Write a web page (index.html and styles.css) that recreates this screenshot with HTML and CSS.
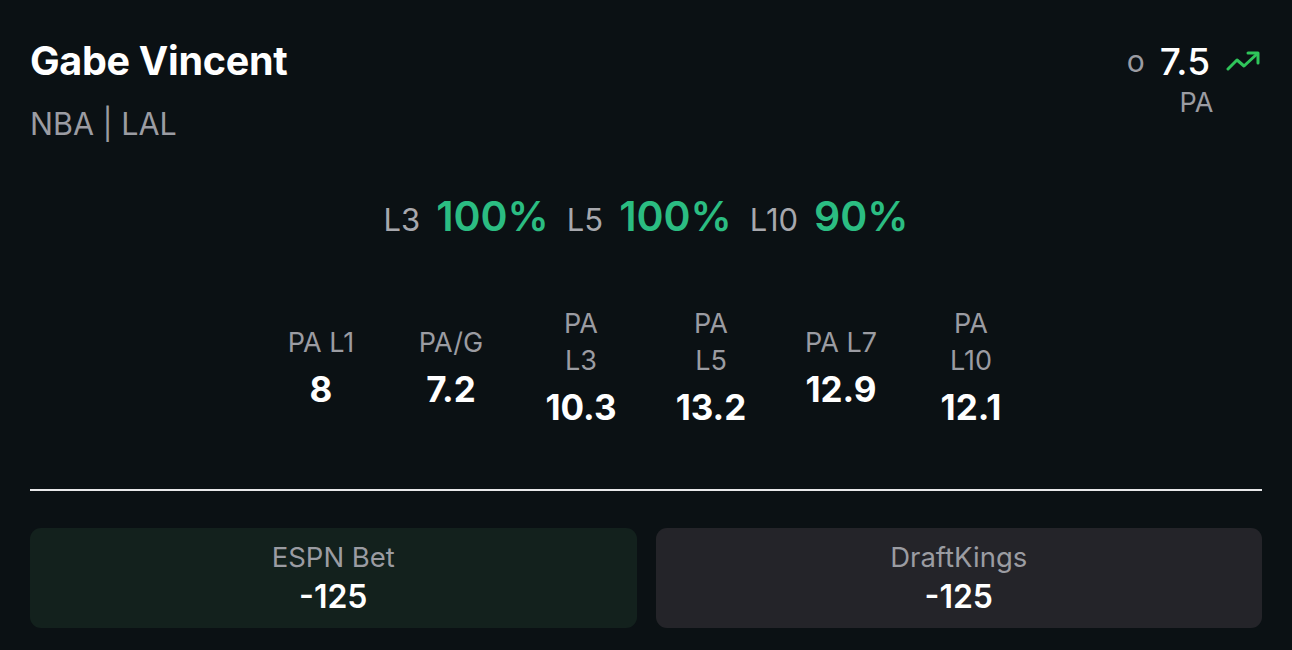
FILE: index.html
```html
<!DOCTYPE html>
<html lang="en">
<head>
    <meta charset="UTF-8">
    <meta name="viewport" content="width=device-width, initial-scale=1.0">
    <title>Gabe Vincent - PA</title>
    <link rel="stylesheet" href="styles.css">
</head>
<body>
    <div class="prop-card">
        <div class="header">
            <div class="player">
                <h1 class="player-name">Gabe Vincent</h1>
                <p class="player-meta">NBA | LAL</p>
            </div>
            <div class="line">
                <div class="line-top">
                    <span class="line-side">o</span>
                    <span class="line-value">7.5</span>
                    <svg class="trend-icon" viewBox="0 0 36 22" fill="none" stroke="currentColor" stroke-width="3" stroke-linecap="round" stroke-linejoin="round">
                        <polyline points="2,19 11,10 18,16 31,4"></polyline>
                        <polyline points="22,3 32,3 32,13"></polyline>
                    </svg>
                </div>
                <div class="line-stat">PA</div>
            </div>
        </div>

        <div class="hit-rates">
            <span class="hit-label">L3</span>
            <span class="hit-value">100%</span>
            <span class="hit-label">L5</span>
            <span class="hit-value">100%</span>
            <span class="hit-label">L10</span>
            <span class="hit-value">90%</span>
        </div>

        <div class="stats">
            <div class="stat">
                <div class="stat-label">PA L1</div>
                <div class="stat-value">8</div>
            </div>
            <div class="stat">
                <div class="stat-label">PA/G</div>
                <div class="stat-value">7.2</div>
            </div>
            <div class="stat">
                <div class="stat-label">PA<br>L3</div>
                <div class="stat-value">10.3</div>
            </div>
            <div class="stat">
                <div class="stat-label">PA<br>L5</div>
                <div class="stat-value">13.2</div>
            </div>
            <div class="stat">
                <div class="stat-label">PA L7</div>
                <div class="stat-value">12.9</div>
            </div>
            <div class="stat">
                <div class="stat-label">PA<br>L10</div>
                <div class="stat-value">12.1</div>
            </div>
        </div>

        <hr class="divider">

        <div class="books">
            <div class="book book-best">
                <div class="book-name">ESPN Bet</div>
                <div class="book-odds">-125</div>
            </div>
            <div class="book">
                <div class="book-name">DraftKings</div>
                <div class="book-odds">-125</div>
            </div>
        </div>
    </div>
</body>
</html>
```

FILE: styles.css
```css
body {
    margin: 0;
    background: #0b1114;
    color: #fff;
    font-family: Inter, "Noto Sans", sans-serif;
}
.prop-card {
    padding: 36px 30px 0;
}
.header {
    display: flex;
    justify-content: space-between;
    align-items: flex-start;
}
.player-name {
    margin: 0;
    font-size: 39.5px;
    line-height: 50px;
    font-weight: 700;
    letter-spacing: -0.3px;
}
.player-meta {
    margin: 20px 0 0;
    font-size: 30.5px;
    line-height: 36px;
    color: #9b9ca2;
}
.line {
    display: flex;
    flex-direction: column;
    align-items: center;
}
.line-top {
    display: flex;
    align-items: center;
    gap: 15px;
    height: 50px;
}
.line-side {
    font-size: 30px;
    color: #9b9ca2;
}
.line-value {
    font-size: 37px;
    font-weight: 500;
}
.trend-icon {
    width: 36px;
    height: 22px;
    color: #2fc55a;
    margin-left: 1px;
}
.line-stat {
    padding-left: 4px;
    font-size: 27px;
    color: #9b9ca2;
}
.hit-rates {
    display: flex;
    justify-content: center;
    align-items: baseline;
    gap: 18px;
    margin-top: 49px;
}
.hit-label {
    font-size: 31px;
    color: #a7a8ad;
}
.hit-value {
    font-size: 41px;
    font-weight: 600;
    color: #2bbd82;
    margin-left: -2px;
}
.stats {
    display: flex;
    justify-content: center;
    align-items: center;
    gap: 30px;
    margin-top: 64px;
}
.stat {
    width: 100px;
    text-align: center;
}
.stat-label {
    font-size: 27px;
    line-height: 37px;
    color: #9b9ca2;
}
.stat-value {
    margin-top: 5px;
    font-size: 35px;
    line-height: 46px;
    font-weight: 700;
}
.divider {
    margin: 59px 0 0;
    border: none;
    height: 2px;
    background: #e8e8ea;
}
.books {
    display: grid;
    grid-template-columns: 1fr 1fr;
    gap: 19px;
    margin-top: 37px;
}
.book {
    height: 100px;
    border-radius: 11px;
    background: #242429;
    display: flex;
    flex-direction: column;
    align-items: center;
    justify-content: center;
}
.book-best {
    background: #13211d;
}
.book-name {
    font-size: 27.5px;
    line-height: 38px;
    color: #9b9ca2;
}
.book-odds {
    font-size: 32px;
    line-height: 42px;
    font-weight: 600;
}
```
